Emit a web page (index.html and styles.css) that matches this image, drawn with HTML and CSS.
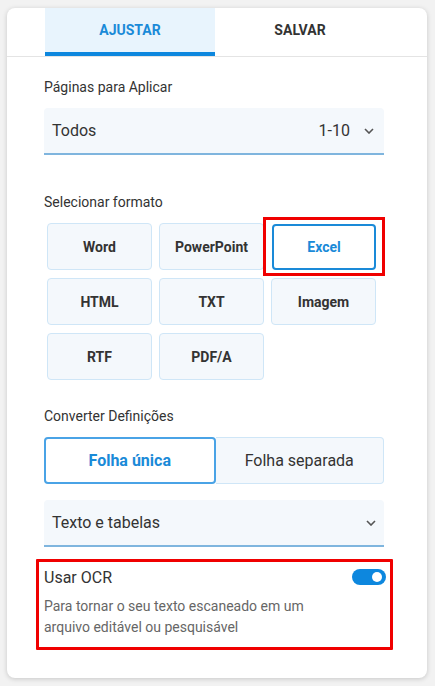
FILE: index.html
```html
<!DOCTYPE html>
<html lang="pt">
<head>
<meta charset="utf-8">
<link rel="stylesheet" href="styles.css">
</head>
<body>
<div class="card">
  <div class="tabs">
    <div class="tab active">AJUSTAR</div>
    <div class="tab">SALVAR</div>
  </div>
  <div class="content">
    <div class="label first">Páginas para Aplicar</div>
    <div class="select">
      <span class="sel-text">Todos</span>
      <span class="sel-right">1-10</span>
      <svg class="chev" width="10" height="6" viewBox="0 0 10 6"><path d="M1 1 L5 5 L9 1" fill="none" stroke="#555" stroke-width="1.6"/></svg>
    </div>

    <div class="label second">Selecionar formato</div>
    <div class="grid">
      <div class="fmt">Word</div>
      <div class="fmt">PowerPoint</div>
      <div class="fmt sel">Excel</div>
      <div class="fmt">HTML</div>
      <div class="fmt">TXT</div>
      <div class="fmt">Imagem</div>
      <div class="fmt">RTF</div>
      <div class="fmt">PDF/A</div>
    </div>

    <div class="label third">Converter Definições</div>
    <div class="seg">
      <div class="seg-item on">Folha única</div>
      <div class="seg-item">Folha separada</div>
    </div>

    <div class="select select2">
      <span class="sel-text">Texto e tabelas</span>
      <svg class="chev" width="10" height="6" viewBox="0 0 10 6"><path d="M1 1 L5 5 L9 1" fill="none" stroke="#555" stroke-width="1.6"/></svg>
    </div>

    <div class="ocr">
      <div class="ocr-head">
        <span class="ocr-title">Usar OCR</span>
        <span class="toggle"><span class="knob"></span></span>
      </div>
      <div class="ocr-desc">Para tornar o seu texto escaneado em um<br>arquivo editável ou pesquisável</div>
    </div>
  </div>
</div>
</body>
</html>
```
FILE: styles.css
```css
* { box-sizing: border-box; }
html, body { margin: 0; padding: 0; }
body {
  background: #f2f2f2;
  font-family: Roboto, "Liberation Sans", Arial, sans-serif;
  color: #333;
  width: 435px;
  height: 686px;
  overflow: hidden;
}
.card {
  margin: 8px 0 0 7px;
  width: 420px;
  height: 670px;
  background: #fff;
  border-radius: 8px;
  box-shadow: 0 1px 5px rgba(0,0,0,0.18);
}
.tabs {
  display: flex;
  padding-left: 38px;
  border-bottom: 1px solid #e4e4e4;
  height: 49px;
}
.tab {
  width: 170px;
  height: 48px;
  display: flex;
  align-items: center;
  justify-content: center;
  padding-bottom: 4px;
  font-size: 14px;
  font-weight: 700;
  color: #333;
}
.tab.active {
  background: #e8f4fd;
  color: #1a8ad8;
  border-bottom: 4px solid #0d87de;
  padding-bottom: 0;
}
.content {
  padding: 0 43px 0 37px;
}
.label {
  font-size: 14px;
  line-height: 20px;
  color: #333;
}
.label.first { margin-top: 20px; }
.label.second { margin-top: 37px; }
.label.third { margin-top: 26px; }
.select {
  margin-top: 11px;
  height: 47px;
  background: #f4f8fc;
  border-bottom: 2px solid #7fb5de;
  border-radius: 4px 4px 0 0;
  display: flex;
  align-items: center;
  padding: 0 10px 0 8px;
  font-size: 16px;
  color: #333;
}
.sel-text { flex: 1; }
.sel-right { margin-right: 14px; }
.chev { display: block; }
.grid {
  margin-top: 11px;
  padding-left: 3px;
  display: grid;
  grid-template-columns: repeat(3, 105px);
  grid-auto-rows: 47px;
  column-gap: 7px;
  row-gap: 8px;
}
.fmt {
  background: #f4f8fc;
  border: 1px solid #cfe6f7;
  border-radius: 4px;
  display: flex;
  align-items: center;
  justify-content: center;
  font-size: 14px;
  font-weight: 700;
  color: #333;
}
.fmt.sel {
  position: relative;
  background: #fff;
  border: 2px solid #1a8ad8;
  color: #1a8ad8;
  margin: 1px 0 0 1px;
}
.fmt.sel::after {
  content: "";
  position: absolute;
  left: -11px;
  top: -9px;
  right: -11px;
  bottom: -8px;
  border: 3px solid #f00000;
}
.seg {
  margin-top: 11px;
  display: flex;
  height: 47px;
}
.seg-item {
  flex: 1;
  display: flex;
  align-items: center;
  justify-content: center;
  font-size: 16px;
  background: #f4f8fc;
  border: 1px solid #cfe6f7;
  border-left: none;
  border-radius: 0 4px 4px 0;
  color: #333;
}
.seg-item.on {
  background: #fff;
  border: 2px solid #4aa3e6;
  border-radius: 4px;
  color: #1a8ad8;
  font-weight: 700;
}
.select2 {
  margin-top: 16px;
  padding-right: 8px;
}
.ocr {
  position: relative;
  margin-top: 21px;
}
.ocr::after {
  content: "";
  position: absolute;
  left: -8px;
  top: -9px;
  right: -9px;
  bottom: -12px;
  border: 3px solid #f00000;
  border-radius: 1px;
}
.ocr-head {
  display: flex;
  align-items: center;
  justify-content: space-between;
  height: 18px;
}
.ocr-title {
  font-size: 16px;
  color: #333;
}
.toggle {
  width: 34px;
  height: 16px;
  border-radius: 8px;
  background: #0d87de;
  margin-right: -2px;
  display: flex;
  align-items: center;
  justify-content: flex-end;
  padding-right: 4px;
}
.knob {
  width: 10px;
  height: 10px;
  border-radius: 50%;
  background: #fff;
}
.ocr-desc {
  margin-top: 10px;
  font-size: 14px;
  line-height: 21px;
  color: #666;
}
```
